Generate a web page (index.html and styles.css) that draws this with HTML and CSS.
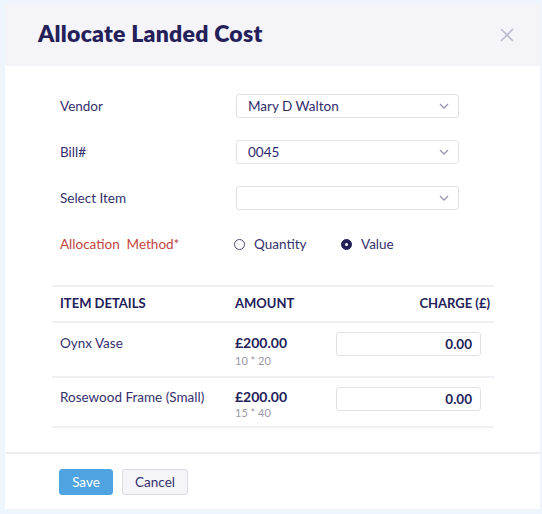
FILE: index.html
```html
<!DOCTYPE html>
<html>
<head>
<meta charset="utf-8">
<link rel="stylesheet" href="styles.css">
</head>
<body>
<div class="modal">
  <div class="header">
    <h1 class="title">Allocate Landed Cost</h1>
    <svg class="close" width="14" height="14" viewBox="0 0 14 14"><path d="M1 1L13 13M13 1L1 13" stroke="#bcbbcc" stroke-width="1.6" fill="none"/></svg>
  </div>
  <div class="content">
    <div class="form">
      <div class="row">
        <div class="label">Vendor</div>
        <div class="select"><span>Mary D Walton</span><svg class="chev" width="10" height="6" viewBox="0 0 10 6"><path d="M1 1l4 4 4-4" stroke="#9b99ad" stroke-width="1.4" fill="none"/></svg></div>
      </div>
      <div class="row">
        <div class="label">Bill#</div>
        <div class="select"><span>0045</span><svg class="chev" width="10" height="6" viewBox="0 0 10 6"><path d="M1 1l4 4 4-4" stroke="#9b99ad" stroke-width="1.4" fill="none"/></svg></div>
      </div>
      <div class="row">
        <div class="label">Select Item</div>
        <div class="select"><span></span><svg class="chev" width="10" height="6" viewBox="0 0 10 6"><path d="M1 1l4 4 4-4" stroke="#9b99ad" stroke-width="1.4" fill="none"/></svg></div>
      </div>
      <div class="row">
        <div class="label req">Allocation&nbsp; Method*</div>
        <div class="radios">
          <label class="radio"><span class="dot"></span>Quantity</label>
          <label class="radio on"><span class="dot"></span>Value</label>
        </div>
      </div>
    </div>
    <div class="table">
      <div class="trow thead">
        <div class="c1">ITEM DETAILS</div>
        <div class="c2">AMOUNT</div>
        <div class="c3">CHARGE (£)</div>
      </div>
      <div class="trow item r1">
        <div class="c1">Oynx Vase</div>
        <div class="c2"><div class="amt">£200.00</div><div class="sub">10 * 20</div></div>
        <div class="c3"><div class="input">0.00</div></div>
      </div>
      <div class="trow item r2">
        <div class="c1">Rosewood Frame (Small)</div>
        <div class="c2"><div class="amt">£200.00</div><div class="sub">15 * 40</div></div>
        <div class="c3"><div class="input">0.00</div></div>
      </div>
    </div>
  </div>
  <div class="footer">
    <button class="btn save">Save</button>
    <button class="btn cancel">Cancel</button>
  </div>
</div>
</body>
</html>
```
FILE: styles.css
```css
html, body { margin: 0; padding: 0; }
body {
  background: #eef5fd;
  font-family: "Lato", "Open Sans", sans-serif;
  color: #2f2b6b;
  width: 542px;
  height: 514px;
  overflow: hidden;
}
.modal {
  margin: 4px 0 0 5px;
  width: 535px;
  height: 505px;
  background: #fff;
  display: flex;
  flex-direction: column;
}
.header {
  height: 62px;
  background: #f5f4f9;
  display: flex;
  align-items: center;
  justify-content: space-between;
  padding: 0 26px 0 33px;
}
.title {
  margin: 0;
  font-size: 23px;
  font-weight: 800;
  color: #24215a;
  letter-spacing: 0.25px;
  position: relative;
  top: -2px;
}
.content {
  padding: 28px 46px 0 47px;
  flex: 1;
}
.form { padding-left: 8px; display: flex; flex-direction: column; gap: 22px; }
.row { display: flex; align-items: center; height: 24px; }
.label { width: 176px; font-size: 13.5px; color: #34306e; }
.label.req { color: #c4443f; }
.select {
  width: 223px;
  height: 24px;
  box-sizing: border-box;
  border: 1px solid #e2e1e8;
  border-radius: 3px;
  display: flex;
  align-items: center;
  justify-content: space-between;
  padding: 0 9px 0 11px;
  font-size: 13.5px;
  color: #2f2b6b;
}
.radios { display: flex; margin-left: -2px; }
.radio { display: flex; align-items: center; font-size: 13.5px; color: #34306e; width: 107px; }
.dot {
  width: 11px; height: 11px; box-sizing: border-box;
  border: 1.3px solid #4a476e;
  border-radius: 50%;
  margin-right: 9px;
  position: relative;
}
.radio.on .dot { background: #24215a; border-color: #24215a; }
.radio.on .dot::after {
  content: ""; position: absolute; left: 3px; top: 3px; width: 3px; height: 3px;
  border-radius: 50%; background: #fff;
}
.table { margin-top: 29px; border-top: 2px solid #f0eff4; }
.trow {
  display: grid;
  grid-template-columns: 183px 101px 158px;
  border-bottom: 2px solid #f0eff4;
  box-sizing: border-box;
}
.c1 { padding-left: 8px; }
.c3 { text-align: right; padding-right: 4px; }
.thead {
  height: 36px;
  align-items: center;
  padding-bottom: 2px;
  font-size: 13px;
  font-weight: 700;
  color: #24215a;
}
.item { font-size: 13.5px; color: #34306e; }
.r1 { height: 55px; }
.r2 { height: 50px; }
.item .c1, .item .c2 { padding-top: 11px; line-height: 18px; }
.r2 .c1, .r2 .c2 { padding-top: 10px; }
.amt { font-weight: 700; color: #24215a; font-size: 14px; line-height: 18px; }
.sub { font-size: 11px; line-height: 14px; color: #9a98a6; margin-top: 2px; }
.r2 .sub { margin-top: 0; }
.item .c3 { padding-top: 9px; padding-right: 13px; display: flex; justify-content: flex-end; align-items: flex-start; }
.input {
  width: 145px; height: 24px; box-sizing: border-box;
  border: 1px solid #e2e1e8; border-radius: 3px;
  font-size: 13.5px; font-weight: 700; color: #24215a;
  display: flex; align-items: center; justify-content: flex-end;
  padding-right: 8px;
}
.footer {
  border-top: 2px solid #eeedf2;
  padding: 15px 0 14px 54px;
  display: flex;
  gap: 9px;
}
.btn {
  height: 26px;
  border-radius: 3px;
  font-family: "Lato", "Open Sans", sans-serif;
  font-size: 13.5px;
  padding: 0;
  cursor: pointer;
}
.save { width: 54px; background: #4ea3e0; border: 1px solid #4ea3e0; color: #fff; }
.cancel { width: 66px; background: #f5f4f9; border: 1px solid #dcdbe3; color: #34306e; }
```
